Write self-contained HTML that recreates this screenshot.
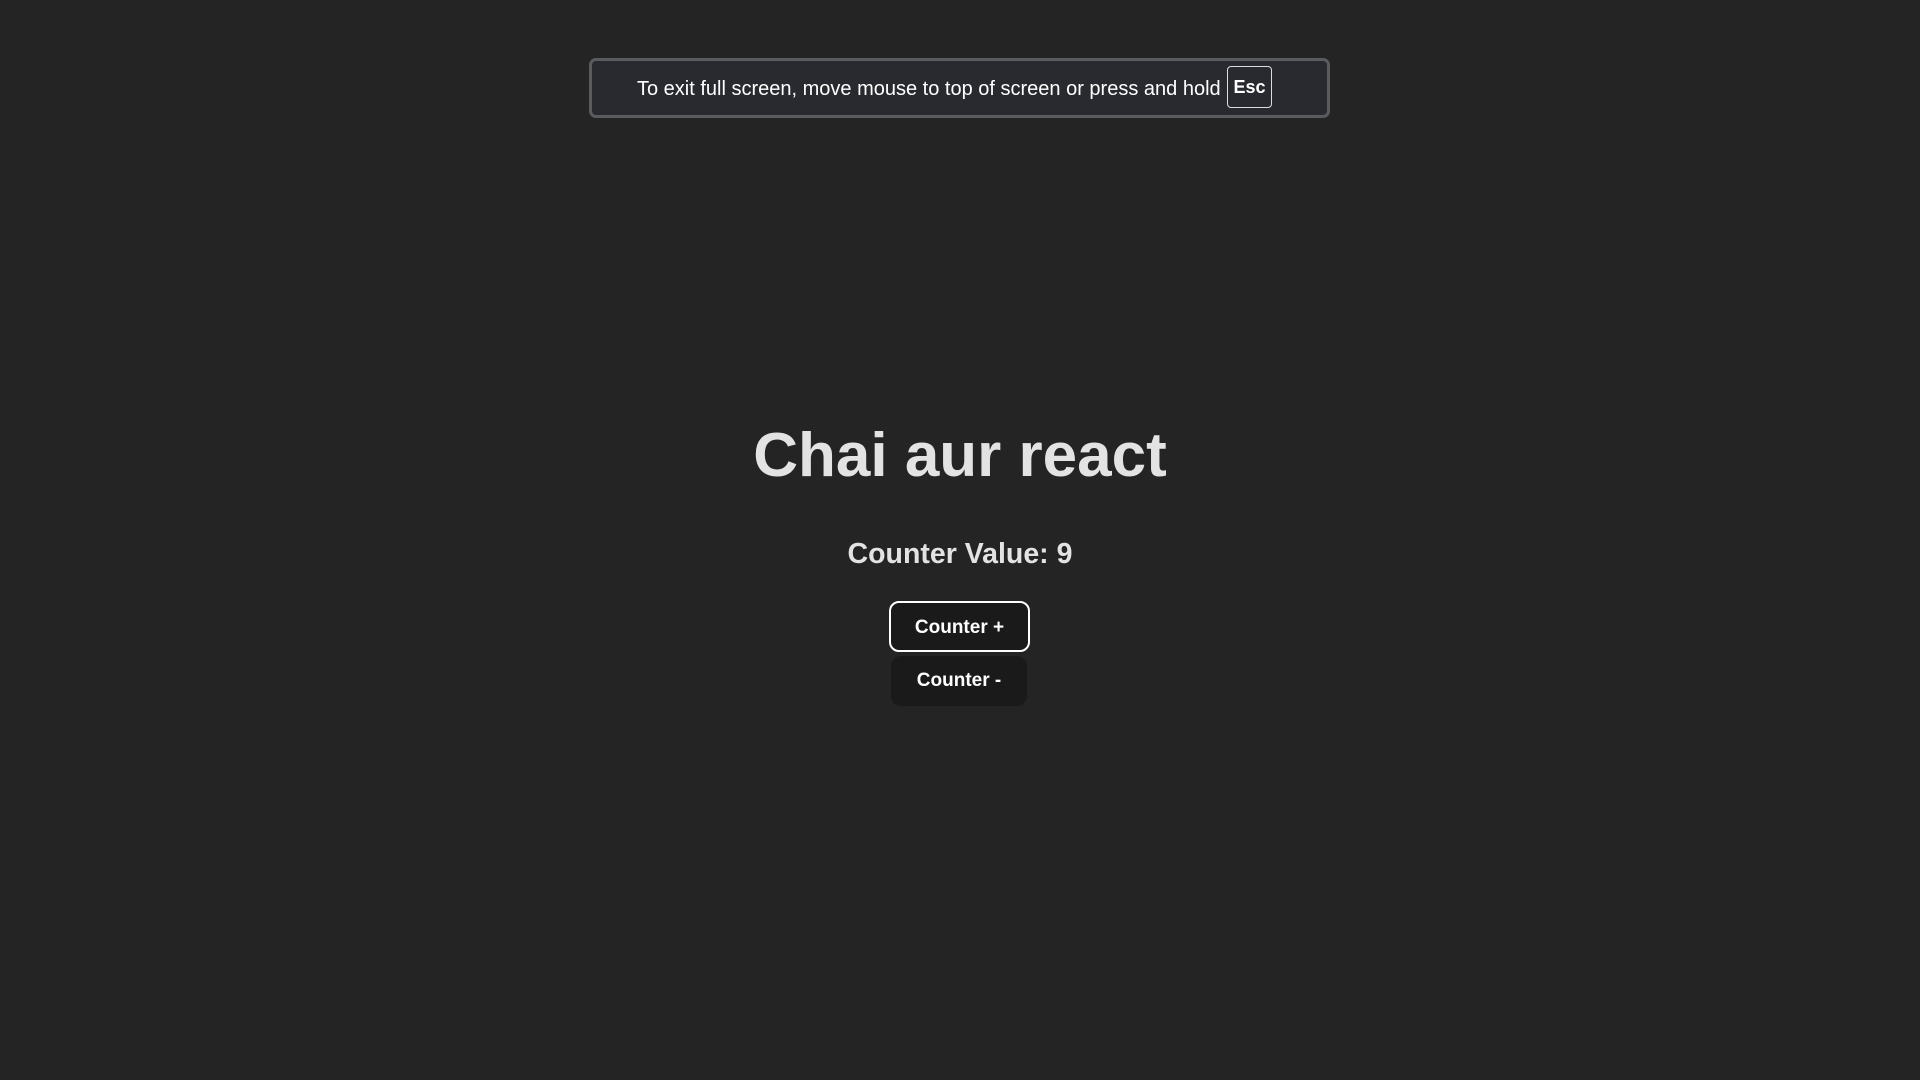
<!DOCTYPE html>
<html><head><style>
html,body{margin:0;padding:0;width:1920px;height:1080px;background:#242424;overflow:hidden;font-family:"Liberation Sans",sans-serif;}
.banner{position:absolute;left:589px;top:58px;width:735px;height:54px;background:#292a30;border:3px solid #5a5b5e;border-radius:7px;color:#fff;font-size:20px;}
.banner .t{position:absolute;left:45px;top:17px;white-space:nowrap;}
.esc{position:absolute;left:635px;top:5px;width:45px;height:42px;border:1.5px solid #ddd;border-radius:4px;font-weight:bold;font-size:18px;line-height:41px;text-align:center;box-sizing:border-box;}
h1{position:absolute;left:0;width:1920px;top:411px;margin:0;text-align:center;font-size:62px;font-weight:bold;color:#e3e3e3;line-height:90px;}
h2{position:absolute;left:0;width:1920px;top:534px;margin:0;text-align:center;font-size:28.5px;font-weight:bold;color:#e3e3e3;line-height:40px;}
.btn{position:absolute;background:#1a1a1a;color:#fff;font-size:19px;font-weight:bold;text-align:center;box-sizing:border-box;border-radius:10px;}
.b1{left:889px;top:601px;width:141px;height:51px;border:2px solid #fff;line-height:49px;}
.b2{left:891px;top:656px;width:136px;height:50px;line-height:50px;}
</style></head><body>
<div class="banner"><span class="t">To exit full screen, move mouse to top of screen or press and hold</span><div class="esc">Esc</div></div>
<h1>Chai aur react</h1>
<h2>Counter Value: 9</h2>
<div class="btn b1">Counter +</div>
<div class="btn b2">Counter -</div>
</body></html>
